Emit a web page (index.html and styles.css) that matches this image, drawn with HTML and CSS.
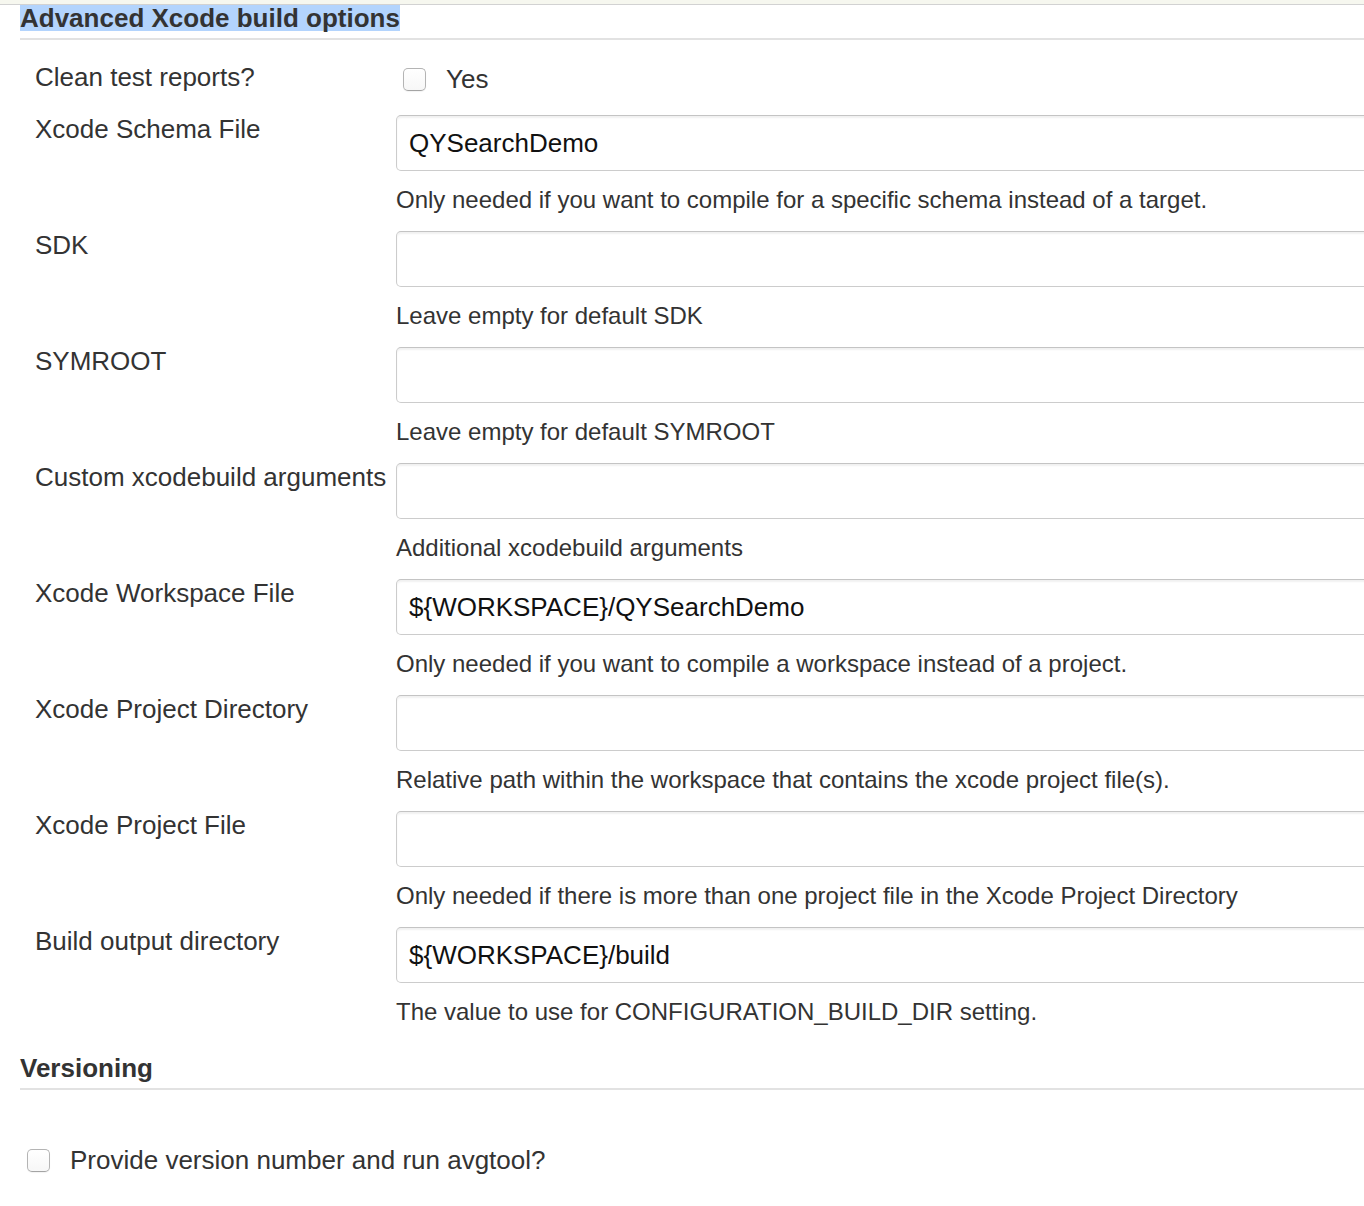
FILE: index.html
```html
<!DOCTYPE html>
<html>
<head>
<meta charset="utf-8">
<title>Advanced Xcode build options</title>
<link rel="stylesheet" href="styles.css">
</head>
<body>
<div class="topstrip"></div>
<h2 class="section-title"><span class="selected">Advanced Xcode build options</span></h2>
<div class="form">
  <div class="row check-row">
    <div class="label">Clean test reports?</div>
    <div class="control"><label class="check"><input type="checkbox" class="cb"><span>Yes</span></label></div>
  </div>
  <div class="row field">
    <div class="label">Xcode Schema File</div>
    <div class="control"><input class="text" type="text" value="QYSearchDemo"></div>
    <div class="help">Only needed if you want to compile for a specific schema instead of a target.</div>
  </div>
  <div class="row field">
    <div class="label">SDK</div>
    <div class="control"><input class="text" type="text" value=""></div>
    <div class="help">Leave empty for default SDK</div>
  </div>
  <div class="row field">
    <div class="label">SYMROOT</div>
    <div class="control"><input class="text" type="text" value=""></div>
    <div class="help">Leave empty for default SYMROOT</div>
  </div>
  <div class="row field">
    <div class="label">Custom xcodebuild arguments</div>
    <div class="control"><input class="text" type="text" value=""></div>
    <div class="help">Additional xcodebuild arguments</div>
  </div>
  <div class="row field">
    <div class="label">Xcode Workspace File</div>
    <div class="control"><input class="text" type="text" value="${WORKSPACE}/QYSearchDemo"></div>
    <div class="help">Only needed if you want to compile a workspace instead of a project.</div>
  </div>
  <div class="row field">
    <div class="label">Xcode Project Directory</div>
    <div class="control"><input class="text" type="text" value=""></div>
    <div class="help">Relative path within the workspace that contains the xcode project file(s).</div>
  </div>
  <div class="row field">
    <div class="label">Xcode Project File</div>
    <div class="control"><input class="text" type="text" value=""></div>
    <div class="help">Only needed if there is more than one project file in the Xcode Project Directory</div>
  </div>
  <div class="row field">
    <div class="label">Build output directory</div>
    <div class="control"><input class="text" type="text" value="${WORKSPACE}/build"></div>
    <div class="help">The value to use for CONFIGURATION_BUILD_DIR setting.</div>
  </div>
</div>
<h2 class="section-title versioning"><span class="plain">Versioning</span></h2>
<label class="check standalone"><input type="checkbox" class="cb"><span>Provide version number and run avgtool?</span></label>
</body>
</html>
```

FILE: styles.css
```css
html, body {
  margin: 0;
  padding: 0;
  background: #ffffff;
  overflow: hidden;
}
body {
  font-family: "Liberation Sans", Arial, Helvetica, sans-serif;
  color: #333333;
  width: 1364px;
  height: 1206px;
}
.topstrip {
  height: 4px;
  background: #f6f7ef;
  border-bottom: 1px solid #d2d2d2;
}
.section-title {
  margin: 0 0 0 20px;
  padding: 0 0 7px 0;
  font-size: 26px;
  font-weight: bold;
  line-height: 26px;
  color: #333333;
  border-bottom: 2px solid #e2e2e2;
}
.section-title span {
  display: inline-block;
  line-height: 26px;
}
.section-title .selected {
  background: #b3d4fd;
}
.versioning {
  margin-top: 29px;
}
.form {
  padding: 23px 0 0 35px;
}
.row {
  display: grid;
  grid-template-columns: 361px 1000px;
}
.label {
  font-size: 26px;
  line-height: 28px;
  color: #333333;
  white-space: nowrap;
}
.check-row {
  margin-bottom: 24px;
}
.field {
  margin-bottom: 17px;
}
.help {
  grid-column: 2;
  margin-top: 15px;
  font-size: 24px;
  line-height: 28px;
  color: #333333;
}
.text {
  box-sizing: border-box;
  display: block;
  width: 1000px;
  height: 56px;
  margin: 0;
  padding: 0 12px;
  border: 1px solid #cccccc;
  border-top-color: #c4c4c4;
  border-radius: 5px;
  box-shadow: inset 0 2px 2px rgba(0, 0, 0, 0.06);
  font-family: "Liberation Sans", Arial, Helvetica, sans-serif;
  font-size: 26px;
  color: #111111;
  background: #ffffff;
  outline: none;
}
.check {
  display: flex;
  align-items: center;
  font-size: 26px;
  line-height: 30px;
  color: #333333;
}
.check-row .check {
  align-items: flex-start;
  margin-left: 7px;
  height: 28px;
  line-height: 28px;
}
.check-row .check span {
  padding-top: 2px;
}
.cb {
  appearance: none;
  -webkit-appearance: none;
  box-sizing: border-box;
  width: 23px;
  height: 23px;
  margin: 0 20px 0 0;
  border: 1px solid #b4b4b4;
  border-bottom-color: #a4a4a4;
  border-radius: 5px;
  background: linear-gradient(#ffffff, #f7f7f7);
  box-shadow: 0 1px 1px rgba(0, 0, 0, 0.05);
  flex: none;
}
.check-row .cb {
  margin-top: 5px;
}
.standalone {
  margin: 55px 0 0 27px;
}
```
